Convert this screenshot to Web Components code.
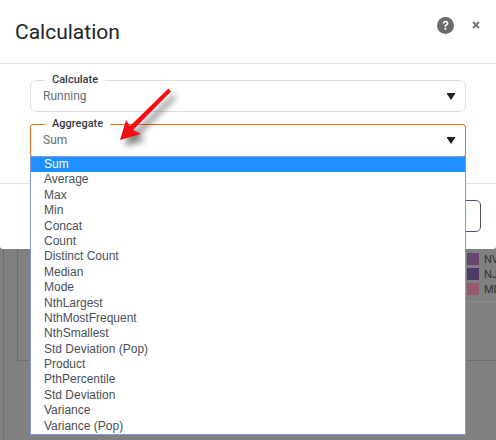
<!DOCTYPE html>
<html>
<head>
<meta charset="utf-8">
<title>Calculation</title>
<style>
  html, body { margin: 0; height: 100%; overflow: hidden; }
  body { font-family: Roboto, "Liberation Sans", sans-serif; background: #808080; }
</style>
</head>
<body>
<calc-page>
  <calc-backdrop></calc-backdrop>
  <calc-dialog heading="Calculation">
    <calc-select label="Calculate" value="Running"></calc-select>
    <calc-select label="Aggregate" value="Sum" open>
      <calc-option selected>Sum</calc-option>
      <calc-option>Average</calc-option>
      <calc-option>Max</calc-option>
      <calc-option>Min</calc-option>
      <calc-option>Concat</calc-option>
      <calc-option>Count</calc-option>
      <calc-option>Distinct Count</calc-option>
      <calc-option>Median</calc-option>
      <calc-option>Mode</calc-option>
      <calc-option>NthLargest</calc-option>
      <calc-option>NthMostFrequent</calc-option>
      <calc-option>NthSmallest</calc-option>
      <calc-option>Std Deviation (Pop)</calc-option>
      <calc-option>Product</calc-option>
      <calc-option>PthPercentile</calc-option>
      <calc-option>Std Deviation</calc-option>
      <calc-option>Variance</calc-option>
      <calc-option>Variance (Pop)</calc-option>
    </calc-select>
  </calc-dialog>
  <calc-callout></calc-callout>
</calc-page>

<script>
class CalcPage extends HTMLElement {
  constructor() {
    super();
    this.attachShadow({ mode: "open" });
    this.shadowRoot.innerHTML = `
      <style>
        :host { display: block; position: relative; width: 496px; height: 440px; overflow: hidden; }
      </style>
      <slot></slot>
    `;
  }
}

// the dimmed report behind the dialog
class CalcBackdrop extends HTMLElement {
  constructor() {
    super();
    this.attachShadow({ mode: "open" });
    this.shadowRoot.innerHTML = `
      <style>
        :host { display: block; height: 440px; padding: 249px 0 0 3px; box-sizing: border-box; }
        .outer { height: 100%; border-left: 1px solid #6e6e6e; padding-left: 13px; }
        .inner { height: 111px; border-left: 1px solid #6e6e6e; border-bottom: 1px solid #6e6e6e; display: flex; justify-content: flex-end; }
        .legend { width: 29px; height: 48px; display: flex; flex-direction: column; gap: 3px; padding-top: 4px; border-bottom: 1px solid #8e8e8e; flex: none; }
        .item { display: flex; align-items: center; gap: 5px; height: 12px; font: 11px Roboto, sans-serif; color: #333; overflow: hidden; white-space: nowrap; }
        i { width: 12px; height: 12px; flex: none; }
      </style>
      <div class="outer">
        <div class="inner">
          <div class="legend">
            <div class="item"><i style="background:#654672"></i>NV</div>
            <div class="item"><i style="background:#4f3a67"></i>NJ</div>
            <div class="item"><i style="background:#955a70"></i>MD</div>
          </div>
        </div>
      </div>
    `;
  }
}

class CalcDialog extends HTMLElement {
  constructor() {
    super();
    this.attachShadow({ mode: "open" });
    this.shadowRoot.innerHTML = `
      <style>
        :host { display: block; position: absolute; top: 0; left: 0; width: 496px; height: 249px; background: #fff; border-radius: 0 0 3px 3px; }
        header { height: 63px; box-sizing: content-box; border-bottom: 1px solid #dee2e6; display: flex; align-items: flex-start; padding: 0 16px 0 15px; }
        h1 { margin: 17px 0 0; font: 400 21px/30px Roboto, sans-serif; color: #212529; flex: 1; }
        .help { margin: 17px 0 0; width: 17px; height: 17px; }
        .close { margin: 21px 0 0 18px; width: 8px; height: 8px; }
        .body { height: 120px; box-sizing: border-box; border-bottom: 1px solid #dee2e6; padding: 9px 30px 0; display: flex; flex-direction: column; gap: 5px; }
        footer { display: flex; justify-content: flex-end; padding: 16px 15px 0 0; }
        button { height: 32px; width: 62px; box-sizing: border-box; background: #fff; border: 1px solid #4a5568; border-radius: 5px; font: 14px Roboto, sans-serif; color: #6c757d; padding: 0 13px 0 0; text-align: right; }
      </style>
      <header>
        <h1></h1>
        <svg class="help" viewBox="0 0 17 17">
          <circle cx="8.5" cy="8.5" r="8.5" fill="#6c6c6c"/>
          <path d="M5.7 6.5C5.8 4.8 7 3.8 8.6 3.8c1.6 0 2.8 1 2.8 2.4 0 1.2-.7 1.7-1.4 2.2-.6.4-.8.7-.8 1.4H7.5c0-1.2.4-1.7 1.1-2.2.6-.4.9-.7.9-1.3 0-.6-.4-1-1-1-.7 0-1 .5-1.1 1.2z" fill="#fff"/>
          <rect x="7.5" y="10.8" width="1.8" height="1.9" fill="#fff"/>
        </svg>
        <svg class="close" viewBox="0 0 8 8"><path d="M1 1l6 6M7 1L1 7" stroke="#6c757d" stroke-width="2" fill="none"/></svg>
      </header>
      <div class="body"><slot></slot></div>
      <footer><button>Cancel</button></footer>
    `;
    this.shadowRoot.querySelector("h1").textContent = this.getAttribute("heading") || "";
  }
}

class CalcSelect extends HTMLElement {
  constructor() {
    super();
    this.attachShadow({ mode: "open" });
    this.shadowRoot.innerHTML = `
      <style>
        :host { display: block; position: relative; }
        fieldset { margin: 0; padding: 0 10px 6px 12px; border: 1px solid #dedede; border-radius: 6px; display: block; min-width: 0; height: 39px; box-sizing: border-box; }
        :host([open]) fieldset { border-color: #ee7320; border-radius: 4px; height: 40px; border-bottom-color: #f0a070; }
        legend { margin-left: 2px; padding: 0 7px; font: 500 11px/14px Roboto, sans-serif; color: #343a40; }
        .row { display: flex; align-items: center; justify-content: space-between; height: 18px; font: 12px/18px Roboto, sans-serif; color: #686d71; }
        svg { width: 8px; height: 7px; }
        .list { display: none; position: absolute; top: 39px; left: 0; right: 0; z-index: 2; background: #fff; border: 1px solid #7f9ddd; }
        :host([open]) .list { display: block; }
      </style>
      <fieldset>
        <legend></legend>
        <div class="row">
          <span class="value"></span>
          <svg viewBox="0 0 8 7"><path d="M0 0h8v1L4 7 0 1z" fill="#212529"/></svg>
        </div>
      </fieldset>
      <div class="list"><slot></slot></div>
    `;
    this.shadowRoot.querySelector("legend").textContent = this.getAttribute("label");
    this.shadowRoot.querySelector(".value").textContent = this.getAttribute("value");
  }
}

class CalcOption extends HTMLElement {
  constructor() {
    super();
    this.attachShadow({ mode: "open" });
    this.shadowRoot.innerHTML = `
      <style>
        :host { display: block; height: 15.4px; padding-left: 13px; font: 12px/15.4px "Liberation Sans", Arial, sans-serif; color: #495057; white-space: nowrap; }
        :host([selected]) { background: #1e90ff; color: #fff; }
      </style>
      <slot></slot>
    `;
  }
}

// red annotation arrow pasted on top of the screenshot
class CalcCallout extends HTMLElement {
  constructor() {
    super();
    this.attachShadow({ mode: "open" });
    this.shadowRoot.innerHTML = `
      <style>
        :host { display: block; position: absolute; left: 110px; top: 80px; width: 80px; height: 80px; z-index: 3; pointer-events: none; }
        svg { display: block; overflow: visible; filter: drop-shadow(5px 6px 3px rgba(0,0,0,.5)); }
      </style>
      <svg width="80" height="80" viewBox="0 0 80 80">
        <path d="M58.5 8.5L61 11.5 23 50 31 54 10 60 16 40 20 46z" fill="#f50f14"/>
      </svg>
    `;
  }
}

customElements.define("calc-page", CalcPage);
customElements.define("calc-backdrop", CalcBackdrop);
customElements.define("calc-dialog", CalcDialog);
customElements.define("calc-select", CalcSelect);
customElements.define("calc-option", CalcOption);
customElements.define("calc-callout", CalcCallout);
</script>
</body>
</html>
